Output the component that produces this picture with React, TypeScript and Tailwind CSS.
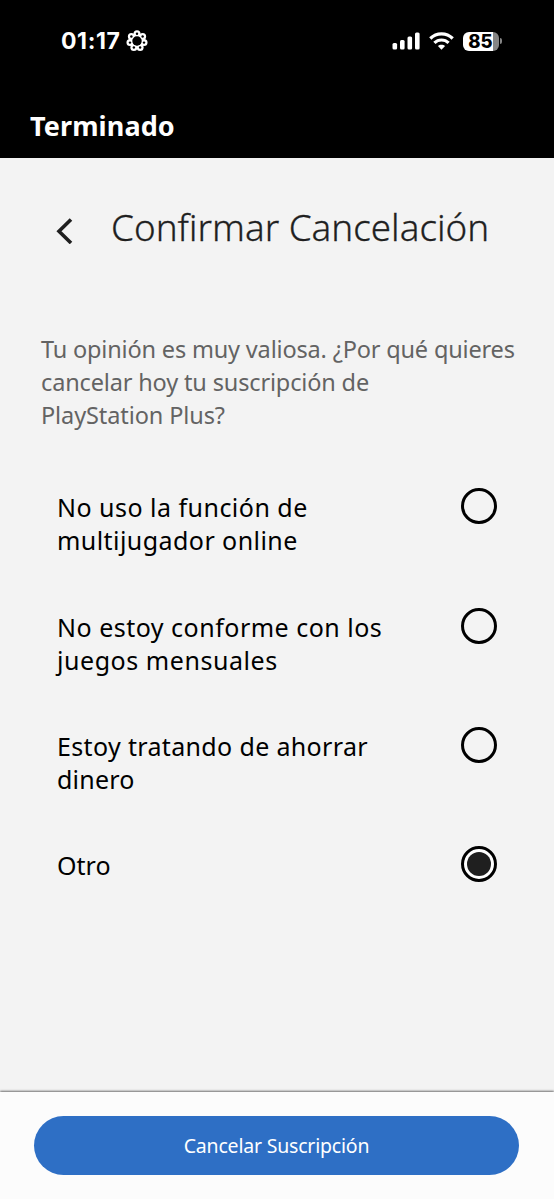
import { useState } from "react";
import clsx from "clsx";

interface Reason {
    id: string;
    lines: { text: string; tracking: string }[];
    height: string;
}

const reasons: Reason[] = [
    {
        id: "multiplayer",
        lines: [
            { text: "No uso la función de", tracking: "tracking-[0.48px]" },
            { text: "multijugador online", tracking: "tracking-[0.44px]" },
        ],
        height: "h-[119.3px]",
    },
    {
        id: "games",
        lines: [
            { text: "No estoy conforme con los", tracking: "tracking-[0.5px]" },
            { text: "juegos mensuales", tracking: "tracking-[0.55px]" },
        ],
        height: "h-[119.3px]",
    },
    {
        id: "money",
        lines: [
            { text: "Estoy tratando de ahorrar", tracking: "tracking-[0.35px]" },
            { text: "dinero", tracking: "tracking-[0.2px]" },
        ],
        height: "h-[119.3px]",
    },
    { id: "other", lines: [{ text: "Otro", tracking: "tracking-[0px]" }], height: "h-[60px]" },
];

const FocusIcon = () => {
    const petals = Array.from({ length: 7 }, (_, i) => {
        const angle = (i * 2 * Math.PI) / 7 - Math.PI / 2;
        return { x: 11 + 7.2 * Math.cos(angle), y: 11 + 7.2 * Math.sin(angle) };
    });

    return (
        <svg className="size-[22px]" viewBox="0 0 22 22" fill="white">
            <circle cx="11" cy="11" r="6.4" fill="none" stroke="white" strokeWidth="3" />
            {petals.map((p, i) => (
                <circle key={i} cx={p.x} cy={p.y} r="3.5" />
            ))}
            {petals.map((p, i) => (
                <circle key={i} cx={p.x} cy={p.y} r="1.2" fill="black" />
            ))}
            <circle cx="11" cy="11" r="4.7" fill="black" />
        </svg>
    );
};

const SignalIcon = () => (
    <svg className="h-[18px] w-[28px]" viewBox="0 0 28 18" fill="white">
        <rect x="0.5" y="11" width="4.6" height="6.5" rx="1.5" />
        <rect x="8" y="8" width="4.6" height="9.5" rx="1.5" />
        <rect x="15.5" y="4.5" width="4.6" height="13" rx="1.5" />
        <rect x="23" y="0.5" width="4.6" height="17" rx="1.5" />
    </svg>
);

const WifiIcon = () => (
    <svg className="h-[18px] w-[25px]" viewBox="0 0 25 18" fill="none" stroke="white" strokeWidth="3.2">
        <path d="M1.3 6.5C7.5 0.3 17.5 0.3 23.7 6.5" />
        <path d="M5.4 10.9C9.4 7 15.6 7 19.6 10.9" />
        <path d="M12.5 17.7L8.9 14.1C10.9 12.2 14.1 12.2 16.1 14.1Z" fill="white" stroke="none" />
    </svg>
);

const Battery = () => (
    <div className="flex items-center gap-px">
        <div className="flex h-[19px] w-[36px] items-center justify-center rounded-[6px] bg-linear-to-r from-white from-84% to-[#858585] to-84% pr-px font-['Inter'] text-[18.5px] leading-none font-extrabold text-black">
            85
        </div>
        <div className="h-[6px] w-[2px] rounded-r-full bg-[#858585]" />
    </div>
);

const StatusBar = () => (
    <div className="flex h-[82px] items-center justify-between pr-[52px] pl-[61px] text-white">
        <div className="flex items-center gap-[5px]">
            <span className="w-[60px] pt-px font-['Inter'] text-[23px] leading-none font-bold tracking-[0.6px]">01:17</span>
            <FocusIcon />
        </div>
        <div className="flex items-center gap-[9px]">
            <SignalIcon />
            <WifiIcon />
            <Battery />
        </div>
    </div>
);

interface RadioProps {
    checked: boolean;
}

const Radio = ({ checked }: RadioProps) => (
    <span
        className={clsx(
            "flex size-[36px] shrink-0 items-center justify-center rounded-full border-[3px] border-black",
            checked && "bg-white"
        )}
    >
        {checked && <span className="size-[24px] rounded-full bg-[#1f1f1f]" />}
    </span>
);

export default function App() {
    const [selected, setSelected] = useState("other");

    return (
        <div className="flex h-[1199px] w-[554px] flex-col overflow-hidden bg-[#f3f3f3] font-['Noto_Sans',sans-serif]">
            <header className="h-[158px] shrink-0 bg-black">
                <StatusBar />
                <button className="ml-[30px] block pt-[26px] text-[27px] leading-[36px] font-bold tracking-[0.1px] text-white">
                    Terminado
                </button>
            </header>

            <main className="flex-1">
                {/* Title */}
                <div className="flex items-center pt-[45px] pl-[56px]">
                    <button aria-label="Atrás" className="mt-[7px] w-[55px]">
                        <svg className="h-[26px] w-[17px]" viewBox="0 0 17 26" fill="none" stroke="#1f1f1f" strokeWidth="3.6">
                            <path d="M15 1.5L3 13.3L15 25" />
                        </svg>
                    </button>
                    <h1 className="text-[36.8px] leading-[48px] font-light whitespace-nowrap text-[#1f1f1f] [-webkit-text-stroke:0.3px_#1f1f1f]">
                        Confirmar Cancelación
                    </h1>
                </div>

                <p className="mt-[82px] ml-[41px] text-[23.5px] leading-[33px] whitespace-nowrap text-[#636363]">
                    <span className="block tracking-[-0.17px]">Tu opinión es muy valiosa. ¿Por qué quieres</span>
                    <span className="block tracking-[-0.15px]">cancelar hoy tu suscripción de</span>
                    <span className="block tracking-[-0.1px]">PlayStation Plus?</span>
                </p>

                {/* Reasons */}
                <div className="mt-[56.4px] pr-[57px] pl-[57px]">
                    {reasons.map((reason) => (
                        <button
                            key={reason.id}
                            onClick={() => setSelected(reason.id)}
                            className={clsx("flex w-full items-start justify-between text-left", reason.height)}
                        >
                            <span className="pt-[3px] text-[25px] leading-[33px] whitespace-nowrap text-black">
                                {reason.lines.map((line) => (
                                    <span key={line.text} className={clsx("block", line.tracking)}>
                                        {line.text}
                                    </span>
                                ))}
                            </span>
                            <Radio checked={selected === reason.id} />
                        </button>
                    ))}
                </div>
            </main>

            <footer className="h-[107px] shrink-0 bg-[#fcfcfc] px-[34px] pt-[24px] shadow-[0_-1px_2px_rgba(0,0,0,0.55)]">
                <button className="h-[59px] w-[485px] rounded-full bg-[#2e6fc5] text-[19.5px] tracking-[-0.2px] text-white">
                    Cancelar Suscripción
                </button>
            </footer>
        </div>
    );
}
